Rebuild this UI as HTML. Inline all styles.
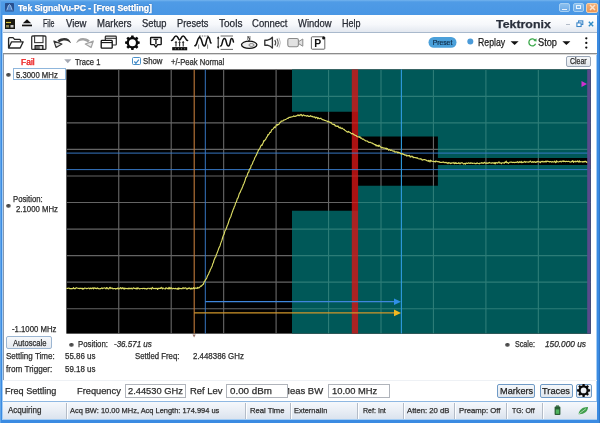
<!DOCTYPE html>
<html><head><meta charset="utf-8"><title>Tek SignalVu-PC</title>
<style>
html,body{margin:0;padding:0;}
body{width:600px;height:423px;overflow:hidden;position:relative;background:#fff;font-family:"Liberation Sans",sans-serif;}
.r{position:absolute;}
.t{-webkit-text-stroke:0.25px currentColor;position:absolute;white-space:nowrap;transform-origin:0 0;line-height:normal;}
</style></head><body><div id="w" style="position:absolute;left:0;top:0;width:600px;height:423px;filter:blur(0.35px)">
<div class="r" style="left:0px;top:0px;width:600px;height:423px;background:#3b8be2;"></div>
<div class="r" style="left:0px;top:0px;width:600px;height:15.5px;background:linear-gradient(#74b4ee 0%,#4f9be6 12%,#4896e4 100%);"></div>
<div class="r" style="left:0px;top:0px;width:1px;height:423px;background:#62a6ea;"></div>
<div class="r" style="left:599.4px;top:0px;width:0.6px;height:423px;background:#2f78c8;"></div>
<div class="r" style="left:2.3px;top:15px;width:594.9px;height:405.4px;background:#a4cdf4;"></div>
<div class="r" style="left:3.3px;top:15.2px;width:593px;height:403.6px;background:#fff;"></div>
<svg class="r" style="left:4.5px;top:3.2px" width="9" height="8.4" viewBox="0 0 9 8.4"><rect width="9" height="8.4" rx="0.6" fill="#27508f"/><path d="M1.2 7.4 C2.6 7.4 2.8 1.6 4.5 1.6 S6.4 7.4 7.8 7.4" stroke="#a9cdf3" fill="#4f86cf" stroke-width="0.9"/></svg>
<span class="t" style="left:18.00px;top:2.74px;font-size:8.8px;color:#fff;transform:scaleX(0.9789);font-weight:bold;text-shadow:0 0 1.5px #1c4f94,0 0 0.5px #fff;">Tek SignalVu-PC - [Freq Settling]</span>
<div class="r" style="left:559.3px;top:2.6px;width:10.6px;height:9.2px;background:linear-gradient(#8cc0ee,#6aa8e6);border:1px solid #a8d0f2;border-radius:2px;box-sizing:border-box;"></div>
<div class="r" style="left:573.2px;top:2.6px;width:10.8px;height:9.2px;background:linear-gradient(#8cc0ee,#6aa8e6);border:1px solid #a8d0f2;border-radius:2px;box-sizing:border-box;"></div>
<div class="r" style="left:586.4px;top:2.6px;width:11.2px;height:10.4px;background:linear-gradient(#f2b07a,#ec9452);border:1px solid #f6cfa8;border-radius:2px;box-sizing:border-box;"></div>
<div class="r" style="left:562.4px;top:9px;width:4.6px;height:1.4px;background:#eaf4fd;"></div>
<div class="r" style="left:576.2px;top:5px;width:5.2px;height:4.4px;background:transparent;border:1px solid #eaf4fd;border-top-width:1.8px;box-sizing:border-box;"></div>
<svg class="r" style="left:588.5px;top:4.3px" width="7" height="7" viewBox="0 0 7 7"><path d="M1 1L6 6M6 1L1 6" stroke="#fbe3cf" stroke-width="1.5"/></svg>
<div class="r" style="left:3px;top:15.2px;width:593.6px;height:16.5px;background:linear-gradient(#ffffff 0%,#f6f8fb 55%,#e3e8f0 100%);"></div>
<div class="r" style="left:3px;top:31.5px;width:594px;height:1px;background:#a9b9cc;"></div>
<svg class="r" style="left:5px;top:19px" width="10" height="10" viewBox="0 0 10 10"><rect width="10" height="10" fill="#1a1a12"/><path d="M1 3.5H6" stroke="#d8c23a" stroke-width="1.2"/><rect x="1" y="6" width="3" height="2.5" fill="#8a8250"/><rect x="5.5" y="6" width="3" height="2.5" fill="#c9c9c9"/></svg>
<svg class="r" style="left:21px;top:18px" width="12" height="10" viewBox="0 0 12 10"><path d="M6 1.2L10.2 5.2H1.8Z" fill="#111"/><rect x="1" y="6.6" width="10" height="1.7" fill="#111"/></svg>
<span class="t" style="left:43.00px;top:17.77px;font-size:10.2px;color:#262a33;transform:scaleX(0.6997);">File</span>
<span class="t" style="left:66.00px;top:17.77px;font-size:10.2px;color:#262a33;transform:scaleX(0.9351);">View</span>
<span class="t" style="left:97.00px;top:17.77px;font-size:10.2px;color:#262a33;transform:scaleX(0.9367);">Markers</span>
<span class="t" style="left:142.00px;top:17.77px;font-size:10.2px;color:#262a33;transform:scaleX(0.9192);">Setup</span>
<span class="t" style="left:177.00px;top:17.77px;font-size:10.2px;color:#262a33;transform:scaleX(0.9081);">Presets</span>
<span class="t" style="left:219.00px;top:17.77px;font-size:10.2px;color:#262a33;transform:scaleX(0.9870);">Tools</span>
<span class="t" style="left:252.00px;top:17.77px;font-size:10.2px;color:#262a33;transform:scaleX(0.9345);">Connect</span>
<span class="t" style="left:298.00px;top:17.77px;font-size:10.2px;color:#262a33;transform:scaleX(0.9235);">Window</span>
<span class="t" style="left:342.00px;top:17.77px;font-size:10.2px;color:#262a33;transform:scaleX(0.8819);">Help</span>
<span class="t" style="left:496.40px;top:17.64px;font-size:10.9px;color:#2a303c;transform:scaleX(1.1358);font-weight:bold;">Tektronix</span>
<div class="r" style="left:566px;top:24.3px;width:3.6px;height:1px;background:#b4bdc9;"></div>
<svg class="r" style="left:576px;top:19.5px" width="8" height="8" viewBox="0 0 8 8"><rect x="2.6" y="0.9" width="4.2" height="3.6" fill="none" stroke="#3b86c8" stroke-width="1.1"/><rect x="0.9" y="2.9" width="4.2" height="3.6" fill="#fff" stroke="#3b86c8" stroke-width="1.1"/></svg>
<svg class="r" style="left:587.8px;top:20.6px" width="6" height="6" viewBox="0 0 6 6"><path d="M0.8 0.8L5.2 5.2M5.2 0.8L0.8 5.2" stroke="#2f8ac4" stroke-width="1.4"/></svg>
<div class="r" style="left:3px;top:32.5px;width:594px;height:20.5px;background:#fff;"></div>
<div class="r" style="left:3px;top:53px;width:594px;height:1px;background:#8c8c8c;"></div>
<div class="r" style="left:3px;top:54px;width:594px;height:1px;background:#d9d9d9;"></div>
<svg class="r" style="left:0;top:32px" width="600" height="22" viewBox="0 32 600 22"><path d="M8.6 48 V38.6 Q8.6 37.6 9.6 37.6 H13 L14.6 39.4 H19.6 Q20.6 39.4 20.6 40.4 V41.6" fill="none" stroke="#262626" stroke-width="1.35" stroke-linejoin="round"/><path d="M8.6 48 L11.6 41.8 H23.2 L20.2 48 Z" fill="#fff" stroke="#262626" stroke-width="1.35" stroke-linejoin="round"/><rect x="31.7" y="36" width="14.2" height="13.4" rx="1" fill="#fff" stroke="#333" stroke-width="1.3"/><rect x="34.6" y="36" width="8.4" height="6.6" fill="#fff" stroke="#3a3a3a" stroke-width="1.1"/><rect x="35" y="45.6" width="8" height="3.6" fill="#777" stroke="#111" stroke-width="1"/><rect x="39.8" y="46.3" width="2.2" height="2.4" fill="#ddd"/><g><path d="M70.9 42.9 C69.7 38.2 63.8 36 57.4 40.4 L59.3 42.4 C63.6 39.3 68.2 40.2 70.4 43.1 Z" fill="#333"/><path d="M53.9 41.1 L61.9 44 L56.1 47.5 Z" fill="#e4e4e4" stroke="#333" stroke-width="1.2" stroke-linejoin="round"/></g><g transform="translate(147.2 0) scale(-1 1)"><path d="M70.9 42.9 C69.7 38.2 63.8 36 57.4 40.4 L59.3 42.4 C63.6 39.3 68.2 40.2 70.4 43.1 Z" fill="#a2a2a2"/><path d="M53.9 41.1 L61.9 44 L56.1 47.5 Z" fill="#ececec" stroke="#a2a2a2" stroke-width="1.2" stroke-linejoin="round"/></g><rect x="105.3" y="36.2" width="11" height="8.8" rx="0.8" fill="#fff" stroke="#2a2a2a" stroke-width="1.2"/><line x1="105.3" y1="38.3" x2="116.3" y2="38.3" stroke="#2a2a2a" stroke-width="1"/><rect x="101.2" y="40.4" width="11" height="7.8" rx="0.8" fill="#fff" stroke="#111" stroke-width="1.3"/><line x1="101.2" y1="42.6" x2="112.2" y2="42.6" stroke="#111" stroke-width="1.1"/><path d="M138.03 41.30 L139.71 41.54 L139.71 43.86 L138.03 44.10 L137.37 45.69 L138.39 47.05 L136.75 48.69 L135.39 47.67 L133.80 48.33 L133.56 50.01 L131.24 50.01 L131.00 48.33 L129.41 47.67 L128.05 48.69 L126.41 47.05 L127.43 45.69 L126.77 44.10 L125.09 43.86 L125.09 41.54 L126.77 41.30 L127.43 39.71 L126.41 38.35 L128.05 36.71 L129.41 37.73 L131.00 37.07 L131.24 35.39 L133.56 35.39 L133.80 37.07 L135.39 37.73 L136.75 36.71 L138.39 38.35 L137.37 39.71Z M135.90 42.70 A3.5 3.5 0 1 0 128.90 42.70 A3.5 3.5 0 1 0 135.90 42.70Z" fill="#0a0a0a" fill-rule="evenodd"/><path d="M151.2 37.5 H160.6 Q161.2 37.5 161.2 38.1 V44 Q161.2 44.6 160.6 44.6 H157.7 L155.9 47.1 L154.1 44.6 H151.2 Q150.6 44.6 150.6 44 V38.1 Q150.6 37.5 151.2 37.5Z" fill="#fff" stroke="#111" stroke-width="1.35" stroke-linejoin="round"/><text x="155.9" y="43.9" font-family="Liberation Sans, sans-serif" font-weight="bold" font-size="7" text-anchor="middle" fill="#111" stroke="#111" stroke-width="0.35">T</text><path d="M171.5 40.6 C173.6 40.6 173.6 36 176 36 S178.2 40 179.6 40 S181 36 183.2 36 S185.6 40.6 187.6 40.6" fill="none" stroke="#111" stroke-width="1.5" stroke-linecap="round"/><line x1="176" y1="41.6" x2="176" y2="46.6" stroke="#222" stroke-width="1.1"/><path d="M174.5 43 L176 41 L177.3 42.8Z" fill="#333"/><line x1="179.6" y1="41.6" x2="179.6" y2="46.6" stroke="#222" stroke-width="1.1"/><path d="M178.1 43 L179.6 41 L180.9 42.8Z" fill="#333"/><line x1="183.2" y1="41.6" x2="183.2" y2="46.6" stroke="#222" stroke-width="1.1"/><path d="M181.7 43 L183.2 41 L184.5 42.8Z" fill="#333"/><rect x="172.2" y="47.1" width="15" height="3.2" fill="#111"/><rect x="174.85" y="48.3" width="0.7" height="1" fill="#bbb"/><rect x="178.05" y="48.3" width="0.7" height="1" fill="#bbb"/><rect x="181.25" y="48.3" width="0.7" height="1" fill="#bbb"/><rect x="184.45000000000002" y="48.3" width="0.7" height="1" fill="#bbb"/><path d="M194.8 45.8 C197.6 45.8 196.8 37.6 199.6 37.6 S201.6 46 204.2 46 S205.8 37.6 208.2 37.6 S209.4 42 211 43" fill="none" stroke="#111" stroke-width="1.5" stroke-linecap="round"/><line x1="199.4" y1="36" x2="208" y2="36" stroke="#444" stroke-width="0.8" stroke-dasharray="1.4 1"/><path d="M198.6 37L199.6 35.4L200.6 37Z M207.2 37L208.2 35.4L209.2 37Z" fill="#222"/><line x1="198.6" y1="44.5" x2="198.6" y2="48.8" stroke="#666" stroke-width="0.8"/><line x1="207.6" y1="44.5" x2="207.6" y2="48.8" stroke="#666" stroke-width="0.8"/><line x1="218.2" y1="37.5" x2="218.2" y2="47.5" stroke="#111" stroke-width="1"/><path d="M216.9 38.6L218.2 36.2L219.5 38.6Z M216.9 46.4L218.2 48.8L219.5 46.4Z" fill="#111"/><path d="M220.6 46 C222.6 46 222 38.6 224.4 38.6 S226 46 228.4 46 S229.8 38.6 231.6 38.6 S233 41 233.5 42" fill="none" stroke="#111" stroke-width="1.5" stroke-linecap="round"/><line x1="220.6" y1="36" x2="233" y2="36" stroke="#555" stroke-width="0.9"/><line x1="220.6" y1="49.4" x2="233" y2="49.4" stroke="#555" stroke-width="0.9"/><ellipse cx="249.2" cy="44.8" rx="7.7" ry="3.6" fill="#eee" stroke="#111" stroke-width="1.3"/><ellipse cx="251.5" cy="45" rx="2.6" ry="1.4" fill="none" stroke="#555" stroke-width="0.7"/><line x1="249" y1="40" x2="249" y2="42" stroke="#111" stroke-width="1"/><text x="249" y="39.8" font-family="Liberation Sans, sans-serif" font-weight="bold" font-size="4.6" text-anchor="middle" fill="#111">N</text><path d="M264.8 40.2 H267.4 Q270.6 39.4 272.4 37.3 V48.1 Q270.6 46 267.4 45.2 H264.8Z" fill="#fff" stroke="#333" stroke-width="1.35" stroke-linejoin="round"/><path d="M274.8 40 Q276.6 42.7 274.8 45.4" fill="none" stroke="#444" stroke-width="1.2"/><path d="M276.9 38.6 Q279.5 42.7 276.9 46.8" fill="none" stroke="#666" stroke-width="1.1"/><path d="M279 37.8 Q281.8 42.7 279 47.6" fill="none" stroke="#a8a8a8" stroke-width="0.8"/><rect x="287.8" y="38.5" width="10.6" height="8.2" rx="1.6" fill="#e2e2e2" stroke="#8a8a8a" stroke-width="1.1"/><path d="M298.6 41.6 L302.8 39 V46.2 L298.6 43.6Z" fill="#e2e2e2" stroke="#8a8a8a" stroke-width="1" stroke-linejoin="round"/><rect x="311.4" y="36.8" width="13.4" height="12.4" rx="0.8" fill="#fff" stroke="#555" stroke-width="0.9"/><text x="317.6" y="47" font-family="Liberation Sans, sans-serif" font-weight="bold" font-size="10.4" text-anchor="middle" fill="#111">P</text><circle cx="323.6" cy="37.9" r="1.5" fill="#111"/><rect x="428.5" y="37" width="28" height="10.8" rx="5.4" fill="#4ba0da"/><text x="442.5" y="44.9" font-family="Liberation Sans, sans-serif" font-size="6.7" text-anchor="middle" fill="#0f2c48" stroke="#0f2c48" stroke-width="0.2" textLength="19.5" lengthAdjust="spacingAndGlyphs">Preset</text><circle cx="470.3" cy="41.6" r="3" fill="#4a9ad8"/><path d="M510.6 41.2H518.6L514.6 45Z" fill="#111"/><path d="M535.4 40.6 A3.5 3.5 0 1 0 535.6 43.8" fill="none" stroke="#3aa84a" stroke-width="1.3"/><path d="M533.4 40.9 L536.6 41.4 L536.4 38.2Z" fill="#3aa84a"/><path d="M562.4 41.2H570.4L566.4 45Z" fill="#111"/><circle cx="586.3" cy="38.3" r="1.15" fill="#111"/><circle cx="586.3" cy="42.9" r="1.15" fill="#111"/><circle cx="586.3" cy="47.6" r="1.15" fill="#111"/></svg>
<span class="t" style="left:477.70px;top:36.05px;font-size:11px;color:#1a1a1a;transform:scaleX(0.7915);">Replay</span>
<span class="t" style="left:538.00px;top:36.05px;font-size:11px;color:#1a1a1a;transform:scaleX(0.8397);">Stop</span>
<div class="r" style="left:3.2px;top:53.5px;width:1px;height:326px;background:#8898ae;"></div>
<span class="t" style="left:20.50px;top:55.69px;font-size:9.4px;color:#ee3434;transform:scaleX(0.9045);text-shadow:0 0 0.6px #ee3434;">Fail</span>
<svg class="r" style="left:63.5px;top:59.2px" width="8" height="5" viewBox="0 0 8 5"><path d="M0.2 0.3H7.4L3.8 4.3Z" fill="#a4a8b2"/></svg>
<span class="t" style="left:74.80px;top:56.55px;font-size:8.9px;color:#2b2b2b;transform:scaleX(0.8512);">Trace 1</span>
<div class="r" style="left:132px;top:57px;width:8.6px;height:8px;background:#fff;border:1px solid #4a90c8;border-radius:1.5px;box-sizing:border-box;"></div>
<svg class="r" style="left:132.8px;top:57.6px" width="7" height="7" viewBox="0 0 8 8"><path d="M1.5 4L3.3 6L6.7 1.8" stroke="#3b86c6" stroke-width="1.3" fill="none"/></svg>
<span class="t" style="left:143.30px;top:56.25px;font-size:8.9px;color:#2b2b2b;transform:scaleX(0.8759);">Show</span>
<span class="t" style="left:170.90px;top:56.81px;font-size:8.5px;color:#2b2b2b;transform:scaleX(0.8991);">+/-Peak Normal</span>
<div class="r" style="left:565.5px;top:55.6px;width:25px;height:11.4px;background:linear-gradient(#f6f8fa,#e2e6ec);border:1px solid #9aa6b6;border-radius:2px;box-sizing:border-box;"></div>
<span class="t" style="left:569.80px;top:56.98px;font-size:8.2px;color:#2b2b2b;transform:scaleX(0.8472);">Clear</span>
<div class="r" style="left:6.2px;top:72.6px;width:4.4px;height:4px;border-radius:50%;background:radial-gradient(circle at 45% 30%,#444 0%,#555 45%,#bbb 80%)"></div>
<div class="r" style="left:13.2px;top:68.3px;width:53.3px;height:12px;background:#fff;border:1px solid #8fb6dc;box-sizing:border-box;"></div>
<span class="t" style="left:16.00px;top:69.92px;font-size:8.6px;color:#2b2b2b;transform:scaleX(0.9015);">5.3000 MHz</span>
<div class="r" style="left:6.2px;top:203.6px;width:4.4px;height:4px;border-radius:50%;background:radial-gradient(circle at 45% 30%,#444 0%,#555 45%,#bbb 80%)"></div>
<span class="t" style="left:13.00px;top:194.02px;font-size:8.6px;color:#2b2b2b;transform:scaleX(0.9004);">Position:</span>
<span class="t" style="left:15.80px;top:204.32px;font-size:8.6px;color:#2b2b2b;transform:scaleX(0.9059);">2.1000 MHz</span>
<span class="t" style="left:11.80px;top:323.62px;font-size:8.6px;color:#2b2b2b;transform:scaleX(0.9019);">-1.1000 MHz</span>
<svg class="r" style="left:0;top:0" width="600" height="423" viewBox="0 0 600 423"><rect x="66.35" y="69.45" width="524.4" height="264.2" fill="#000"/><path d="M118.75 69.45V333.6M171.20 69.45V333.6M223.65 69.45V333.6M276.10 69.45V333.6M328.55 69.45V333.6M381.00 69.45V333.6M433.45 69.45V333.6M485.90 69.45V333.6M538.35 69.45V333.6M66.35 96.30H590.7M66.35 122.85H590.7M66.35 149.40H590.7M66.35 175.95H590.7M66.35 202.50H590.7M66.35 229.05H590.7M66.35 255.60H590.7M66.35 282.15H590.7M66.35 308.70H590.7" stroke="#646464" stroke-width="1.15" fill="none" /><clipPath id="tc"><path d="M292 69.45H590.7V333.6H292Z M292 111.7H358.0V136.6H437.9V158H590.7V164.9H437.9V185.8H358.0V210.8H292Z" clip-rule="evenodd"/></clipPath><path d="M292 69.45H590.7V333.6H292Z M292 111.7H358.0V136.6H437.9V158H590.7V164.9H437.9V185.8H358.0V210.8H292Z" fill="#005858" fill-rule="evenodd"/><path d="M118.75 69.45V333.6M171.20 69.45V333.6M223.65 69.45V333.6M276.10 69.45V333.6M328.55 69.45V333.6M381.00 69.45V333.6M433.45 69.45V333.6M485.90 69.45V333.6M538.35 69.45V333.6M66.35 96.30H590.7M66.35 122.85H590.7M66.35 149.40H590.7M66.35 175.95H590.7M66.35 202.50H590.7M66.35 229.05H590.7M66.35 255.60H590.7M66.35 282.15H590.7M66.35 308.70H590.7" stroke="#2c7c77" stroke-width="1.15" fill="none" clip-path="url(#tc)"/><rect x="351.8" y="69.45" width="6.30" height="264.15" fill="#d41616" opacity="0.8"/><line x1="66.35" y1="153.1" x2="590.7" y2="153.1" stroke="#397ccc" stroke-width="0.95"/><line x1="66.35" y1="169.6" x2="590.7" y2="169.6" stroke="#397ccc" stroke-width="0.95"/><line x1="194.2" y1="69.45" x2="194.2" y2="333.6" stroke="#c07a3a" stroke-width="1.1"/><line x1="205.3" y1="69.45" x2="205.3" y2="333.6" stroke="#397ccc" stroke-width="0.95"/><line x1="401.4" y1="69.45" x2="401.4" y2="333.6" stroke="#2f9be0" stroke-width="1.1"/><line x1="205.3" y1="301.7" x2="396" y2="301.7" stroke="#3f86dc" stroke-width="1.2"/><path d="M394 298.5L401 301.7L394 305Z" fill="#2f8fe8"/><line x1="194.2" y1="312.9" x2="396" y2="312.9" stroke="#d0962a" stroke-width="1.2"/><path d="M394 309.6L401 312.9L394 316.2Z" fill="#f0b820"/><rect x="587.2" y="69.45" width="3.50" height="264.15" fill="#5a4a8c"/><path d="M581.5 81L587 84L581.5 87Z" fill="#d030d0"/><path d="M66.4 288.30 L67.0 288.60 L67.6 288.31 L68.2 288.27 L68.8 288.03 L69.4 288.31 L70.0 288.84 L70.6 288.57 L71.2 288.81 L71.8 288.50 L72.4 288.56 L73.0 288.47 L73.6 287.73 L74.2 288.74 L74.8 288.60 L75.4 288.60 L76.0 287.72 L76.6 287.70 L77.2 288.04 L77.8 288.21 L78.4 288.52 L79.0 288.38 L79.6 288.61 L80.2 288.14 L80.8 288.52 L81.4 288.56 L82.0 288.14 L82.6 289.09 L83.2 288.62 L83.8 288.88 L84.4 288.15 L85.0 288.10 L85.6 288.26 L86.2 288.36 L86.8 288.65 L87.4 288.50 L88.0 288.22 L88.6 288.02 L89.2 288.19 L89.8 288.89 L90.4 288.08 L91.0 288.50 L91.6 288.57 L92.2 287.80 L92.8 288.42 L93.4 288.92 L94.0 287.59 L94.6 288.27 L95.2 288.36 L95.8 288.07 L96.4 288.60 L97.0 288.38 L97.6 287.81 L98.2 288.73 L98.8 288.67 L99.4 288.78 L100.0 288.98 L100.6 288.54 L101.2 288.45 L101.8 287.88 L102.4 288.65 L103.0 288.16 L103.6 288.22 L104.2 287.89 L104.8 288.01 L105.4 288.19 L106.0 288.92 L106.6 287.59 L107.2 287.82 L107.8 288.50 L108.4 288.98 L109.0 288.63 L109.6 287.64 L110.2 287.39 L110.8 288.54 L111.4 288.11 L112.0 287.95 L112.6 288.79 L113.2 288.84 L113.8 288.46 L114.4 288.50 L115.0 288.57 L115.6 289.04 L116.2 288.65 L116.8 288.61 L117.4 288.62 L118.0 287.77 L118.6 288.91 L119.2 288.78 L119.8 288.61 L120.4 287.61 L121.0 288.15 L121.6 288.74 L122.2 287.68 L122.8 288.33 L123.4 288.81 L124.0 287.88 L124.6 289.04 L125.2 288.62 L125.8 288.34 L126.4 288.53 L127.0 288.66 L127.6 288.45 L128.2 288.86 L128.8 288.14 L129.4 288.23 L130.0 288.82 L130.6 288.41 L131.2 288.05 L131.8 288.78 L132.4 288.99 L133.0 288.22 L133.6 287.85 L134.2 288.35 L134.8 288.34 L135.4 288.28 L136.0 288.96 L136.6 287.99 L137.2 288.90 L137.8 287.89 L138.4 288.09 L139.0 288.65 L139.6 288.85 L140.2 288.74 L140.8 288.54 L141.4 288.46 L142.0 288.46 L142.6 288.63 L143.2 288.33 L143.8 288.51 L144.4 288.63 L145.0 288.40 L145.6 288.71 L146.2 288.63 L146.8 289.20 L147.4 288.53 L148.0 288.23 L148.6 288.25 L149.2 288.39 L149.8 288.77 L150.4 288.27 L151.0 288.55 L151.6 289.13 L152.2 287.37 L152.8 287.95 L153.4 288.50 L154.0 288.56 L154.6 288.50 L155.2 288.23 L155.8 288.66 L156.4 288.51 L157.0 288.19 L157.6 289.37 L158.2 288.54 L158.8 288.18 L159.4 288.36 L160.0 288.31 L160.6 288.37 L161.2 287.31 L161.8 288.21 L162.4 288.80 L163.0 287.93 L163.6 288.37 L164.2 288.78 L164.8 288.74 L165.4 289.00 L166.0 287.72 L166.6 288.26 L167.2 288.26 L167.8 288.65 L168.4 288.84 L169.0 287.33 L169.6 288.84 L170.2 287.82 L170.8 288.67 L171.4 287.80 L172.0 288.47 L172.6 288.88 L173.2 288.34 L173.8 288.48 L174.4 288.72 L175.0 288.46 L175.6 288.36 L176.2 289.01 L176.8 288.82 L177.4 288.28 L178.0 289.50 L178.6 287.94 L179.2 288.77 L179.8 288.29 L180.4 288.45 L181.0 288.68 L181.6 288.49 L182.2 288.66 L182.8 287.79 L183.4 287.80 L184.0 288.65 L184.6 288.01 L185.2 287.99 L185.8 287.81 L186.4 288.91 L187.0 288.70 L187.6 288.99 L188.2 288.02 L188.8 288.40 L189.4 287.94 L190.0 288.71 L190.6 289.03 L191.2 288.03 L191.8 289.00 L192.4 288.75 L193.0 288.26 L193.6 287.52 L194.2 288.83 L194.8 288.18 L195.4 287.91 L196.0 288.23 L196.6 288.14 L197.2 288.46 L197.8 287.29 L198.4 287.94 L199.0 287.83 L199.6 287.53 L200.2 286.56 L200.8 285.96 L201.4 286.21 L202.0 285.33 L202.6 284.75 L203.2 284.54 L203.8 282.99 L204.4 281.22 L205.0 280.97 L205.6 279.29 L206.2 279.15 L206.8 277.69 L207.4 276.04 L208.0 274.97 L208.6 273.94 L209.2 272.26 L209.8 271.36 L210.4 269.42 L211.0 268.47 L211.6 267.26 L212.2 265.91 L212.8 263.58 L213.4 262.77 L214.0 260.22 L214.6 259.06 L215.2 257.21 L215.8 256.89 L216.4 254.41 L217.0 253.32 L217.6 251.66 L218.2 250.11 L218.8 248.27 L219.4 246.98 L220.0 245.97 L220.6 243.63 L221.2 242.15 L221.8 240.65 L222.4 238.48 L223.0 236.37 L223.6 234.98 L224.2 233.98 L224.8 231.27 L225.4 230.11 L226.0 229.19 L226.6 227.56 L227.2 225.71 L227.8 224.50 L228.4 222.72 L229.0 220.64 L229.6 218.94 L230.2 217.73 L230.8 216.77 L231.4 214.59 L232.0 212.86 L232.6 211.31 L233.2 209.42 L233.8 208.40 L234.4 206.41 L235.0 205.47 L235.6 202.84 L236.2 202.37 L236.8 200.46 L237.4 198.41 L238.0 197.97 L238.6 196.07 L239.2 193.80 L239.8 192.86 L240.4 191.88 L241.0 190.14 L241.6 189.20 L242.2 187.72 L242.8 186.20 L243.4 184.56 L244.0 183.46 L244.6 181.68 L245.2 180.09 L245.8 177.58 L246.4 177.29 L247.0 175.99 L247.6 173.92 L248.2 172.44 L248.8 172.01 L249.4 169.16 L250.0 168.68 L250.6 168.11 L251.2 165.44 L251.8 164.76 L252.4 163.93 L253.0 161.83 L253.6 160.82 L254.2 159.69 L254.8 157.69 L255.4 156.76 L256.0 155.66 L256.6 154.63 L257.2 153.07 L257.8 151.81 L258.4 150.32 L259.0 149.45 L259.6 148.86 L260.2 147.48 L260.8 146.07 L261.4 145.07 L262.0 145.49 L262.6 143.91 L263.2 142.77 L263.8 140.54 L264.4 140.91 L265.0 139.94 L265.6 139.52 L266.2 138.12 L266.8 137.02 L267.4 136.35 L268.0 134.48 L268.6 134.80 L269.2 133.67 L269.8 132.44 L270.4 132.46 L271.0 131.90 L271.6 129.91 L272.2 129.52 L272.8 129.24 L273.4 128.55 L274.0 127.70 L274.6 126.86 L275.2 127.52 L275.8 126.53 L276.4 125.09 L277.0 124.51 L277.6 125.23 L278.2 124.46 L278.8 124.32 L279.4 123.46 L280.0 122.35 L280.6 122.37 L281.2 120.99 L281.8 121.16 L282.4 121.06 L283.0 120.93 L283.6 120.08 L284.2 119.98 L284.8 119.88 L285.4 119.52 L286.0 119.31 L286.6 118.84 L287.2 118.34 L287.8 118.52 L288.4 117.98 L289.0 117.40 L289.6 117.28 L290.2 117.33 L290.8 117.09 L291.4 117.01 L292.0 116.78 L292.6 116.69 L293.2 116.41 L293.8 115.83 L294.4 116.38 L295.0 116.52 L295.6 116.17 L296.2 115.82 L296.8 115.98 L297.4 115.32 L298.0 114.86 L298.6 115.57 L299.2 115.11 L299.8 115.73 L300.4 114.97 L301.0 114.35 L301.6 114.99 L302.2 116.04 L302.8 115.27 L303.4 114.90 L304.0 115.16 L304.6 115.70 L305.2 115.72 L305.8 115.62 L306.4 116.17 L307.0 115.89 L307.6 115.65 L308.2 115.96 L308.8 116.47 L309.4 116.28 L310.0 116.40 L310.6 115.67 L311.2 116.15 L311.8 116.62 L312.4 116.32 L313.0 116.99 L313.6 116.92 L314.2 117.17 L314.8 116.87 L315.4 118.11 L316.0 117.74 L316.6 117.32 L317.2 117.61 L317.8 118.78 L318.4 117.77 L319.0 118.44 L319.6 118.67 L320.2 118.47 L320.8 118.20 L321.4 118.95 L322.0 119.24 L322.6 119.77 L323.2 119.86 L323.8 119.79 L324.4 120.36 L325.0 120.48 L325.6 120.61 L326.2 120.82 L326.8 120.99 L327.4 121.65 L328.0 121.25 L328.6 121.72 L329.2 122.28 L329.8 122.00 L330.4 122.72 L331.0 122.40 L331.6 123.23 L332.2 124.03 L332.8 124.33 L333.4 124.38 L334.0 124.61 L334.6 124.44 L335.2 126.04 L335.8 125.82 L336.4 126.36 L337.0 125.88 L337.6 126.47 L338.2 126.12 L338.8 127.47 L339.4 127.84 L340.0 127.01 L340.6 128.06 L341.2 128.64 L341.8 127.99 L342.4 128.26 L343.0 128.87 L343.6 129.35 L344.2 129.34 L344.8 130.21 L345.4 130.60 L346.0 131.05 L346.6 131.38 L347.2 132.00 L347.8 132.16 L348.4 131.46 L349.0 132.08 L349.6 132.16 L350.2 132.45 L350.8 133.14 L351.4 133.47 L352.0 133.96 L352.6 133.43 L353.2 133.86 L353.8 134.65 L354.4 134.87 L355.0 135.13 L355.6 135.52 L356.2 135.55 L356.8 136.44 L357.4 136.60 L358.0 136.74 L358.6 136.81 L359.2 137.32 L359.8 136.61 L360.4 137.62 L361.0 138.34 L361.6 138.03 L362.2 139.02 L362.8 139.30 L363.4 139.00 L364.0 139.75 L364.6 140.01 L365.2 140.61 L365.8 140.96 L366.4 140.98 L367.0 140.93 L367.6 141.47 L368.2 141.77 L368.8 142.35 L369.4 142.43 L370.0 142.27 L370.6 142.27 L371.2 142.91 L371.8 143.01 L372.4 143.10 L373.0 143.74 L373.6 143.82 L374.2 144.30 L374.8 144.70 L375.4 144.55 L376.0 145.88 L376.6 145.04 L377.2 145.84 L377.8 145.67 L378.4 146.29 L379.0 145.11 L379.6 145.98 L380.2 146.60 L380.8 146.95 L381.4 147.86 L382.0 147.26 L382.6 147.85 L383.2 147.85 L383.8 148.13 L384.4 148.16 L385.0 148.09 L385.6 148.56 L386.2 148.12 L386.8 149.22 L387.4 148.54 L388.0 149.25 L388.6 150.19 L389.2 149.45 L389.8 149.75 L390.4 150.40 L391.0 150.14 L391.6 150.01 L392.2 150.63 L392.8 150.96 L393.4 151.20 L394.0 150.81 L394.6 152.01 L395.2 152.17 L395.8 151.71 L396.4 152.00 L397.0 151.91 L397.6 152.84 L398.2 152.19 L398.8 152.93 L399.4 152.66 L400.0 152.77 L400.6 153.52 L401.2 153.96 L401.8 153.61 L402.4 153.53 L403.0 154.32 L403.6 154.17 L404.2 154.50 L404.8 155.18 L405.4 155.22 L406.0 154.76 L406.6 156.08 L407.2 155.36 L407.8 155.87 L408.4 155.49 L409.0 155.92 L409.6 155.43 L410.2 157.03 L410.8 157.05 L411.4 156.20 L412.0 156.27 L412.6 156.40 L413.2 157.69 L413.8 157.20 L414.4 157.52 L415.0 157.58 L415.6 157.81 L416.2 157.58 L416.8 158.18 L417.4 157.75 L418.0 158.45 L418.6 158.75 L419.2 158.96 L419.8 158.83 L420.4 158.70 L421.0 159.27 L421.6 159.15 L422.2 160.10 L422.8 159.91 L423.4 159.68 L424.0 159.67 L424.6 159.69 L425.2 159.71 L425.8 160.05 L426.4 160.42 L427.0 160.61 L427.6 160.73 L428.2 161.44 L428.8 160.41 L429.4 160.79 L430.0 161.99 L430.6 160.21 L431.2 160.84 L431.8 161.20 L432.4 161.27 L433.0 161.45 L433.6 161.27 L434.2 161.59 L434.8 161.54 L435.4 161.90 L436.0 160.90 L436.6 161.37 L437.2 161.79 L437.8 161.45 L438.4 161.50 L439.0 162.23 L439.6 161.78 L440.2 162.36 L440.8 162.46 L441.4 162.35 L442.0 162.48 L442.6 162.29 L443.2 161.83 L443.8 162.43 L444.4 162.68 L445.0 162.34 L445.6 162.56 L446.2 162.94 L446.8 162.34 L447.4 162.99 L448.0 163.52 L448.6 162.59 L449.2 162.91 L449.8 162.83 L450.4 163.54 L451.0 163.08 L451.6 163.35 L452.2 162.75 L452.8 163.05 L453.4 163.09 L454.0 162.42 L454.6 163.73 L455.2 163.55 L455.8 162.51 L456.4 163.54 L457.0 163.21 L457.6 163.45 L458.2 163.43 L458.8 162.70 L459.4 163.22 L460.0 163.90 L460.6 163.07 L461.2 162.89 L461.8 162.75 L462.4 162.81 L463.0 163.43 L463.6 163.97 L464.2 163.47 L464.8 163.39 L465.4 164.18 L466.0 163.08 L466.6 163.02 L467.2 163.49 L467.8 163.50 L468.4 162.87 L469.0 162.81 L469.6 163.39 L470.2 163.37 L470.8 162.74 L471.4 163.18 L472.0 163.04 L472.6 163.44 L473.2 163.20 L473.8 163.21 L474.4 163.10 L475.0 163.66 L475.6 163.79 L476.2 163.08 L476.8 163.56 L477.4 162.92 L478.0 163.24 L478.6 163.51 L479.2 163.81 L479.8 163.05 L480.4 163.17 L481.0 163.27 L481.6 162.58 L482.2 163.18 L482.8 162.90 L483.4 163.30 L484.0 162.69 L484.6 162.34 L485.2 163.14 L485.8 163.21 L486.4 162.87 L487.0 163.43 L487.6 162.95 L488.2 162.81 L488.8 163.22 L489.4 162.39 L490.0 162.73 L490.6 162.97 L491.2 163.30 L491.8 162.88 L492.4 163.05 L493.0 162.65 L493.6 163.01 L494.2 163.54 L494.8 162.58 L495.4 163.78 L496.0 162.56 L496.6 162.81 L497.2 162.85 L497.8 163.17 L498.4 162.25 L499.0 161.89 L499.6 162.95 L500.2 163.01 L500.8 162.93 L501.4 163.71 L502.0 162.73 L502.6 162.73 L503.2 162.98 L503.8 162.74 L504.4 163.24 L505.0 162.06 L505.6 162.38 L506.2 161.14 L506.8 162.82 L507.4 162.33 L508.0 162.83 L508.6 163.30 L509.2 162.42 L509.8 162.30 L510.4 162.18 L511.0 162.02 L511.6 162.09 L512.2 162.58 L512.8 162.32 L513.4 162.31 L514.0 162.20 L514.6 162.61 L515.2 162.43 L515.8 162.16 L516.4 162.46 L517.0 162.12 L517.6 161.70 L518.2 162.73 L518.8 162.32 L519.4 161.73 L520.0 162.53 L520.6 162.22 L521.2 161.45 L521.8 162.70 L522.4 162.17 L523.0 162.38 L523.6 162.09 L524.2 161.94 L524.8 161.36 L525.4 162.36 L526.0 161.97 L526.6 161.82 L527.2 162.06 L527.8 161.94 L528.4 162.17 L529.0 161.73 L529.6 161.85 L530.2 161.00 L530.8 161.67 L531.4 162.10 L532.0 162.35 L532.6 161.66 L533.2 161.75 L533.8 162.42 L534.4 161.64 L535.0 162.06 L535.6 162.42 L536.2 161.76 L536.8 162.23 L537.4 161.44 L538.0 161.80 L538.6 161.68 L539.2 161.75 L539.8 162.15 L540.4 162.65 L541.0 161.43 L541.6 161.46 L542.2 161.88 L542.8 161.26 L543.4 161.87 L544.0 161.90 L544.6 161.55 L545.2 161.87 L545.8 161.04 L546.4 161.96 L547.0 161.03 L547.6 161.37 L548.2 161.42 L548.8 161.48 L549.4 161.98 L550.0 161.66 L550.6 161.47 L551.2 161.84 L551.8 162.25 L552.4 161.62 L553.0 161.76 L553.6 162.11 L554.2 161.72 L554.8 161.10 L555.4 162.60 L556.0 162.49 L556.6 160.81 L557.2 161.59 L557.8 161.77 L558.4 161.99 L559.0 161.87 L559.6 161.49 L560.2 161.18 L560.8 161.64 L561.4 162.01 L562.0 161.16 L562.6 161.19 L563.2 161.59 L563.8 160.83 L564.4 161.50 L565.0 161.43 L565.6 161.78 L566.2 161.32 L566.8 161.25 L567.4 161.44 L568.0 161.58 L568.6 161.33 L569.2 161.60 L569.8 161.90 L570.4 162.07 L571.0 162.28 L571.6 161.29 L572.2 161.43 L572.8 160.61 L573.4 162.36 L574.0 161.31 L574.6 161.59 L575.2 161.81 L575.8 161.06 L576.4 161.79 L577.0 161.59 L577.6 160.87 L578.2 161.72 L578.8 162.08 L579.4 160.85 L580.0 161.92 L580.6 161.68 L581.2 161.79 L581.8 161.78 L582.4 162.12 L583.0 161.51 L583.6 161.95 L584.2 161.44 L584.8 161.89 L585.4 161.27 L586.0 161.56 L586.6 162.29 L587.2 161.78" fill="none" stroke="#dcdc64" stroke-width="1.15" stroke-linejoin="round"/></svg>
<svg class="r" style="left:190px;top:333px" width="8" height="6" viewBox="190 333 8 6"><path d="M192.5 334.4H195.7L194.1 337.6Z" fill="#9a7468"/></svg>
<div class="r" style="left:5.8px;top:336.2px;width:46.4px;height:12.9px;background:linear-gradient(#f7f9fb,#e6eaf0);border:1px solid #9cb6d2;border-radius:2px;box-sizing:border-box;"></div>
<span class="t" style="left:12.80px;top:337.62px;font-size:8.6px;color:#2b2b2b;transform:scaleX(0.8844);">Autoscale</span>
<div class="r" style="left:69.39999999999999px;top:342.6px;width:4.4px;height:4px;border-radius:50%;background:radial-gradient(circle at 45% 30%,#444 0%,#555 45%,#bbb 80%)"></div>
<span class="t" style="left:78.30px;top:339.22px;font-size:8.6px;color:#2b2b2b;transform:scaleX(0.9095);">Position:</span>
<span class="t" style="left:114.00px;top:339.22px;font-size:8.6px;color:#2b2b2b;transform:scaleX(0.9302);font-style:italic;">-36.571 us</span>
<div class="r" style="left:505.3px;top:342.6px;width:4.4px;height:4px;border-radius:50%;background:radial-gradient(circle at 45% 30%,#444 0%,#555 45%,#bbb 80%)"></div>
<span class="t" style="left:515.40px;top:339.22px;font-size:8.6px;color:#2b2b2b;transform:scaleX(0.8326);">Scale:</span>
<span class="t" style="left:545.00px;top:339.22px;font-size:8.6px;color:#2b2b2b;transform:scaleX(0.9635);font-style:italic;">150.000 us</span>
<span class="t" style="left:6.30px;top:351.34px;font-size:8.8px;color:#2b2b2b;transform:scaleX(0.9135);">Settling Time:</span>
<span class="t" style="left:64.80px;top:351.34px;font-size:8.8px;color:#2b2b2b;transform:scaleX(0.9035);">55.86 us</span>
<span class="t" style="left:135.00px;top:351.34px;font-size:8.8px;color:#2b2b2b;transform:scaleX(0.8814);">Settled Freq:</span>
<span class="t" style="left:193.30px;top:351.34px;font-size:8.8px;color:#2b2b2b;transform:scaleX(0.8970);">2.448386 GHz</span>
<span class="t" style="left:6.30px;top:364.04px;font-size:8.8px;color:#2b2b2b;transform:scaleX(0.9283);">from Trigger:</span>
<span class="t" style="left:64.80px;top:364.04px;font-size:8.8px;color:#2b2b2b;transform:scaleX(0.9035);">59.18 us</span>
<div class="r" style="left:3px;top:379.5px;width:594px;height:1.5px;background:#eef1f5;"></div>
<span class="t" style="left:5.00px;top:385.14px;font-size:9.9px;color:#2b2b2b;transform:scaleX(0.9176);">Freq Settling</span>
<span class="t" style="left:77.30px;top:385.14px;font-size:9.9px;color:#2b2b2b;transform:scaleX(0.9386);">Frequency</span>
<div class="r" style="left:125.2px;top:383.5px;width:60.39999999999999px;height:14px;background:#fff;border:1px solid #b0b4bb;box-sizing:border-box;"></div>
<span class="t" style="left:128.00px;top:385.24px;font-size:9.9px;color:#2b2b2b;transform:scaleX(0.9429);">2.44530 GHz</span>
<span class="t" style="left:190.00px;top:385.14px;font-size:9.9px;color:#2b2b2b;transform:scaleX(0.9556);">Ref Lev</span>
<div class="r" style="left:226.3px;top:383.5px;width:61.30000000000001px;height:14px;background:#fff;border:1px solid #b0b4bb;box-sizing:border-box;"></div>
<span class="t" style="left:229.50px;top:385.24px;font-size:9.9px;color:#2b2b2b;transform:scaleX(0.9912);">0.00 dBm</span>
<div class="r" style="left:288px;top:382px;width:40px;height:16px;overflow:hidden">
<span class="t" style="left:-5.60px;top:3.14px;font-size:9.9px;color:#2b2b2b;transform:scaleX(0.9602);">Meas BW</span>
</div>
<div class="r" style="left:328.4px;top:383.5px;width:61.200000000000045px;height:14px;background:#fff;border:1px solid #b0b4bb;box-sizing:border-box;"></div>
<span class="t" style="left:331.60px;top:385.24px;font-size:9.9px;color:#2b2b2b;transform:scaleX(0.9484);">10.00 MHz</span>
<div class="r" style="left:497px;top:383.5px;width:38.200000000000045px;height:14px;background:linear-gradient(#f4f7fa,#e1e7ee);border:1px solid #6f9ac6;border-radius:2px;box-sizing:border-box;"></div>
<span class="t" style="left:500.00px;top:385.14px;font-size:9.9px;color:#1c1c1c;transform:scaleX(0.9287);">Markers</span>
<div class="r" style="left:539.5px;top:383.5px;width:33.0px;height:14px;background:linear-gradient(#f4f7fa,#e1e7ee);border:1px solid #6f9ac6;border-radius:2px;box-sizing:border-box;"></div>
<span class="t" style="left:542.40px;top:385.14px;font-size:9.9px;color:#1c1c1c;transform:scaleX(0.9369);">Traces</span>
<div class="r" style="left:575.6px;top:383.5px;width:16.0px;height:14px;background:linear-gradient(#f4f7fa,#e1e7ee);border:1px solid #6f9ac6;border-radius:2px;box-sizing:border-box;"></div>
<svg class="r" style="left:575px;top:382px" width="18" height="17" viewBox="575 382 18 17"><path d="M588.55 389.17 L590.12 389.37 L590.12 391.43 L588.55 391.63 L587.97 393.03 L588.94 394.28 L587.48 395.74 L586.23 394.77 L584.83 395.35 L584.63 396.92 L582.57 396.92 L582.37 395.35 L580.97 394.77 L579.72 395.74 L578.26 394.28 L579.23 393.03 L578.65 391.63 L577.08 391.43 L577.08 389.37 L578.65 389.17 L579.23 387.77 L578.26 386.52 L579.72 385.06 L580.97 386.03 L582.37 385.45 L582.57 383.88 L584.63 383.88 L584.83 385.45 L586.23 386.03 L587.48 385.06 L588.94 386.52 L587.97 387.77Z M586.50 390.40 A2.9 2.9 0 1 0 580.70 390.40 A2.9 2.9 0 1 0 586.50 390.40Z" fill="#0a0a0a" fill-rule="evenodd"/></svg>
<div class="r" style="left:3px;top:400.6px;width:594px;height:1px;background:#8fb8e2;"></div>
<div class="r" style="left:3px;top:401.6px;width:594px;height:17.4px;background:linear-gradient(#f5f8fc 0%,#e9eef5 50%,#dbe3ee 100%);"></div>
<div class="r" style="left:65.6px;top:402.5px;width:1px;height:16px;background:#b4bcc8;"></div>
<div class="r" style="left:66.6px;top:402.5px;width:1px;height:16px;background:#fdfeff;"></div>
<div class="r" style="left:244.5px;top:402.5px;width:1px;height:16px;background:#b4bcc8;"></div>
<div class="r" style="left:245.5px;top:402.5px;width:1px;height:16px;background:#fdfeff;"></div>
<div class="r" style="left:289.6px;top:402.5px;width:1px;height:16px;background:#b4bcc8;"></div>
<div class="r" style="left:290.6px;top:402.5px;width:1px;height:16px;background:#fdfeff;"></div>
<div class="r" style="left:357.4px;top:402.5px;width:1px;height:16px;background:#b4bcc8;"></div>
<div class="r" style="left:358.4px;top:402.5px;width:1px;height:16px;background:#fdfeff;"></div>
<div class="r" style="left:402.5px;top:402.5px;width:1px;height:16px;background:#b4bcc8;"></div>
<div class="r" style="left:403.5px;top:402.5px;width:1px;height:16px;background:#fdfeff;"></div>
<div class="r" style="left:453.5px;top:402.5px;width:1px;height:16px;background:#b4bcc8;"></div>
<div class="r" style="left:454.5px;top:402.5px;width:1px;height:16px;background:#fdfeff;"></div>
<div class="r" style="left:505.6px;top:402.5px;width:1px;height:16px;background:#b4bcc8;"></div>
<div class="r" style="left:506.6px;top:402.5px;width:1px;height:16px;background:#fdfeff;"></div>
<div class="r" style="left:542px;top:402.5px;width:1px;height:16px;background:#b4bcc8;"></div>
<div class="r" style="left:543px;top:402.5px;width:1px;height:16px;background:#fdfeff;"></div>
<span class="t" style="left:8.00px;top:405.13px;font-size:8.7px;color:#2b2b2b;transform:scaleX(0.9237);">Acquiring</span>
<span class="t" style="left:70.00px;top:405.67px;font-size:8.1px;color:#2b2b2b;transform:scaleX(0.9200);">Acq BW: 10.00 MHz, Acq Length: 174.994 us</span>
<span class="t" style="left:250.00px;top:405.67px;font-size:8.1px;color:#2b2b2b;transform:scaleX(0.9462);">Real Time</span>
<span class="t" style="left:294.40px;top:405.67px;font-size:8.1px;color:#2b2b2b;transform:scaleX(0.9159);">ExternalIn</span>
<span class="t" style="left:363.00px;top:405.67px;font-size:8.1px;color:#2b2b2b;transform:scaleX(0.8732);">Ref: Int</span>
<span class="t" style="left:407.00px;top:405.67px;font-size:8.1px;color:#2b2b2b;transform:scaleX(0.9534);">Atten: 20 dB</span>
<span class="t" style="left:459.00px;top:405.67px;font-size:8.1px;color:#2b2b2b;transform:scaleX(0.9537);">Preamp: Off</span>
<span class="t" style="left:512.00px;top:405.67px;font-size:8.1px;color:#2b2b2b;transform:scaleX(0.8560);">TG: Off</span>
<svg class="r" style="left:553px;top:404px" width="10" height="13" viewBox="553 404 10 13"><rect x="556" y="405.4" width="3" height="1.4" fill="#2f6a3c"/><rect x="554.6" y="406.6" width="5.8" height="8.4" rx="0.8" fill="#2a5e36"/><rect x="555.8" y="409.4" width="3.4" height="4.4" fill="#4fb45e"/></svg>
<svg class="r" style="left:577px;top:405px" width="13" height="11" viewBox="577 405 13 11"><path d="M578.6 414.2 C579 409.6 583 406.8 588 407 C588 411.6 583.6 414.6 578.6 414.2Z" fill="#3f9e4c"/><path d="M578.8 414 L586 408.6" stroke="#d6efd6" stroke-width="0.7"/></svg>
</div></body></html>
